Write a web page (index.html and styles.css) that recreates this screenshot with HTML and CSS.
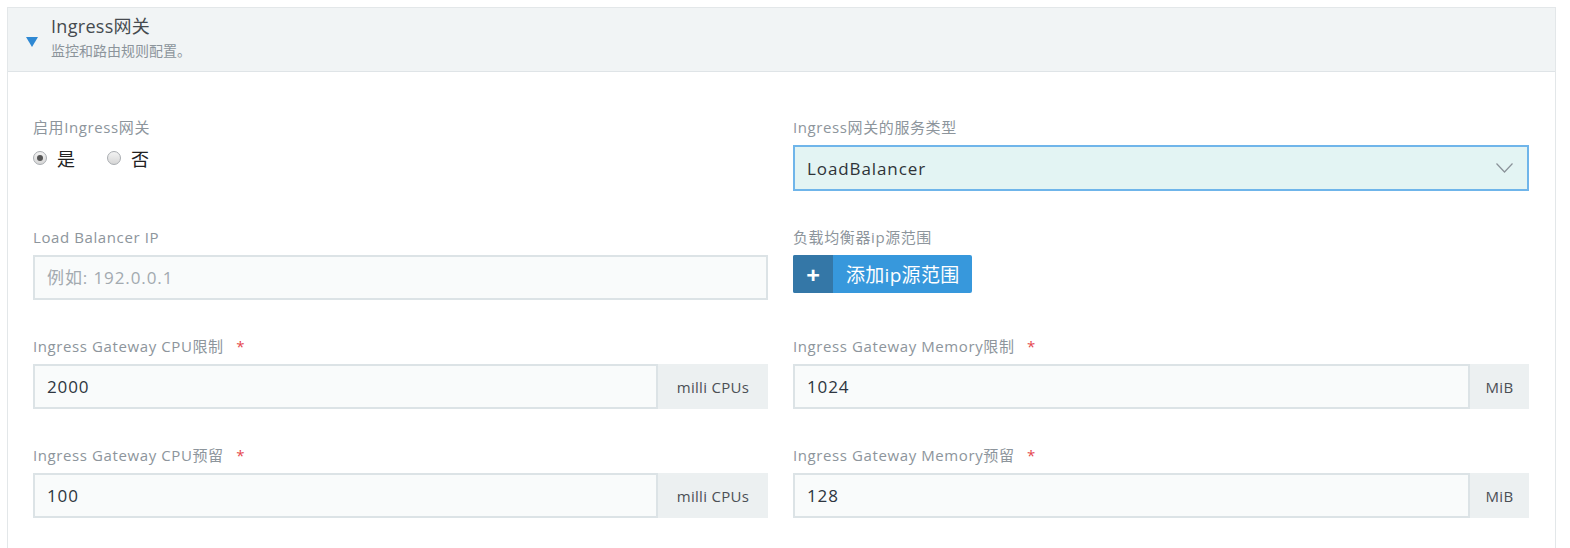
FILE: index.html
```html
<!DOCTYPE html>
<html lang="zh-CN">
<head>
    <meta charset="UTF-8">
    <title>Ingress网关</title>
    <link rel="stylesheet" href="styles.css">
</head>
<body>
    <div class="panel">
        <div class="panel-header">
            <span class="caret"></span>
            <div>
                <h2 class="title">Ingress网关</h2>
                <p class="subtitle">监控和路由规则配置。</p>
            </div>
        </div>

        <div class="panel-body">
            <div class="field">
                <label class="field-label">启用Ingress网关</label>
                <div class="radios">
                    <label class="radio"><span class="dot checked"></span>是</label>
                    <label class="radio"><span class="dot"></span>否</label>
                </div>
            </div>
            <div class="field">
                <label class="field-label">Ingress网关的服务类型</label>
                <div class="select">
                    <span>LoadBalancer</span>
                    <svg width="17" height="10" viewBox="0 0 17 10"><polyline points="0.5,0.5 8.5,9 16.5,0.5" fill="none" stroke="#8a9299" stroke-width="1.2"/></svg>
                </div>
            </div>

            <div class="field">
                <label class="field-label">Load Balancer IP</label>
                <input class="text-input" type="text" placeholder="例如: 192.0.0.1">
            </div>
            <div class="field">
                <label class="field-label">负载均衡器ip源范围</label>
                <div>
                    <button type="button" class="btn-add"><span class="plus">+</span><span class="btn-text">添加ip源范围</span></button>
                </div>
            </div>

            <div class="field">
                <label class="field-label">Ingress Gateway CPU限制 <span class="req">*</span></label>
                <div class="input-group">
                    <input class="text-input" type="text" value="2000">
                    <span class="addon addon-wide">milli CPUs</span>
                </div>
            </div>
            <div class="field">
                <label class="field-label">Ingress Gateway Memory限制 <span class="req">*</span></label>
                <div class="input-group">
                    <input class="text-input" type="text" value="1024">
                    <span class="addon">MiB</span>
                </div>
            </div>

            <div class="field">
                <label class="field-label">Ingress Gateway CPU预留 <span class="req">*</span></label>
                <div class="input-group">
                    <input class="text-input" type="text" value="100">
                    <span class="addon addon-wide">milli CPUs</span>
                </div>
            </div>
            <div class="field">
                <label class="field-label">Ingress Gateway Memory预留 <span class="req">*</span></label>
                <div class="input-group">
                    <input class="text-input" type="text" value="128">
                    <span class="addon">MiB</span>
                </div>
            </div>
        </div>
    </div>
</body>
</html>
```

FILE: styles.css
```css
body {
    margin: 0;
    padding: 7px;
    background: #ffffff;
    font-family: "Open Sans", "Noto Sans CJK SC", sans-serif;
    color: #4a4f54;
}
.panel {
    width: 1549px;
    box-sizing: border-box;
    border: 1px solid #e3e7e9;
    border-bottom: none;
    min-height: 560px;
}
.panel-header {
    display: flex;
    align-items: center;
    height: 64px;
    box-sizing: border-box;
    background: #f1f4f5;
    border-bottom: 1px solid #dfe4e7;
    padding-left: 18px;
}
.caret {
    width: 0;
    height: 0;
    border-left: 6px solid transparent;
    border-right: 6px solid transparent;
    border-top: 10px solid #2f88d3;
    margin-right: 13px;
    margin-top: 4px;
}
.title {
    margin: -6px 0 0 0;
    font-size: 18px;
    font-weight: normal;
    color: #454a4f;
    line-height: 24px;
    letter-spacing: 0.3px;
}
.subtitle {
    margin: 4px 0 0 0;
    font-size: 14px;
    color: #8c949b;
    line-height: 18px;
}
.panel-body {
    display: grid;
    grid-template-columns: 735px 736px;
    column-gap: 25px;
    row-gap: 36px;
    padding: 45px 26px 0 25px;
}
.field-label {
    display: block;
    font-size: 15px;
    line-height: 20px;
    color: #8d959c;
    margin-bottom: 8px;
    letter-spacing: 0.6px;
}
.req {
    color: #e5484d;
    margin-left: 8px;
}
.radios {
    display: flex;
    align-items: center;
    gap: 32px;
}
.radio {
    display: flex;
    align-items: center;
    font-size: 18px;
    color: #222;
}
.dot {
    width: 12px;
    height: 12px;
    border-radius: 50%;
    border: 1px solid #a9adb1;
    background: linear-gradient(#f3f3f3, #d6d6d6);
    margin-right: 10px;
    position: relative;
}
.dot.checked::after {
    content: "";
    position: absolute;
    left: 3px;
    top: 3px;
    width: 6px;
    height: 6px;
    border-radius: 50%;
    background: #555;
}
.select {
    display: flex;
    align-items: center;
    justify-content: space-between;
    height: 46px;
    box-sizing: border-box;
    border: 2px solid #6fb5ea;
    background: #e3f4f3;
    padding: 0 14px 0 12px;
    font-size: 17px;
    letter-spacing: 0.9px;
    color: #2e3338;
}
.text-input {
    display: block;
    width: 100%;
    height: 45px;
    box-sizing: border-box;
    border: 2px solid #dce3e6;
    background: #f9fbfb;
    padding: 0 12px;
    font-family: "Open Sans", "Noto Sans CJK SC", sans-serif;
    font-size: 17px;
    letter-spacing: 0.9px;
    color: #2e3640;
    outline: none;
}
.text-input::placeholder {
    color: #a3aab0;
}
.input-group {
    display: flex;
}
.input-group .text-input {
    flex: 1;
}
.addon {
    display: flex;
    align-items: center;
    justify-content: center;
    width: 59px;
    height: 45px;
    background: #ecf0f1;
    font-size: 15px;
    letter-spacing: 0.3px;
    color: #4b4f55;
}
.addon-wide {
    width: 110px;
}
.btn-add {
    display: inline-flex;
    height: 38px;
    padding: 0;
    border: none;
    border-radius: 2px;
    overflow: hidden;
    cursor: pointer;
    font-family: "Open Sans", "Noto Sans CJK SC", sans-serif;
    background: #3798dc;
    color: #ffffff;
}
.plus {
    width: 40px;
    display: flex;
    align-items: center;
    justify-content: center;
    background: #3477a7;
    font-size: 24px;
    font-weight: bold;
}
.btn-text {
    display: flex;
    align-items: center;
    padding: 0 12px 0 13px;
    font-size: 19px;
    letter-spacing: 0.3px;
}
```
